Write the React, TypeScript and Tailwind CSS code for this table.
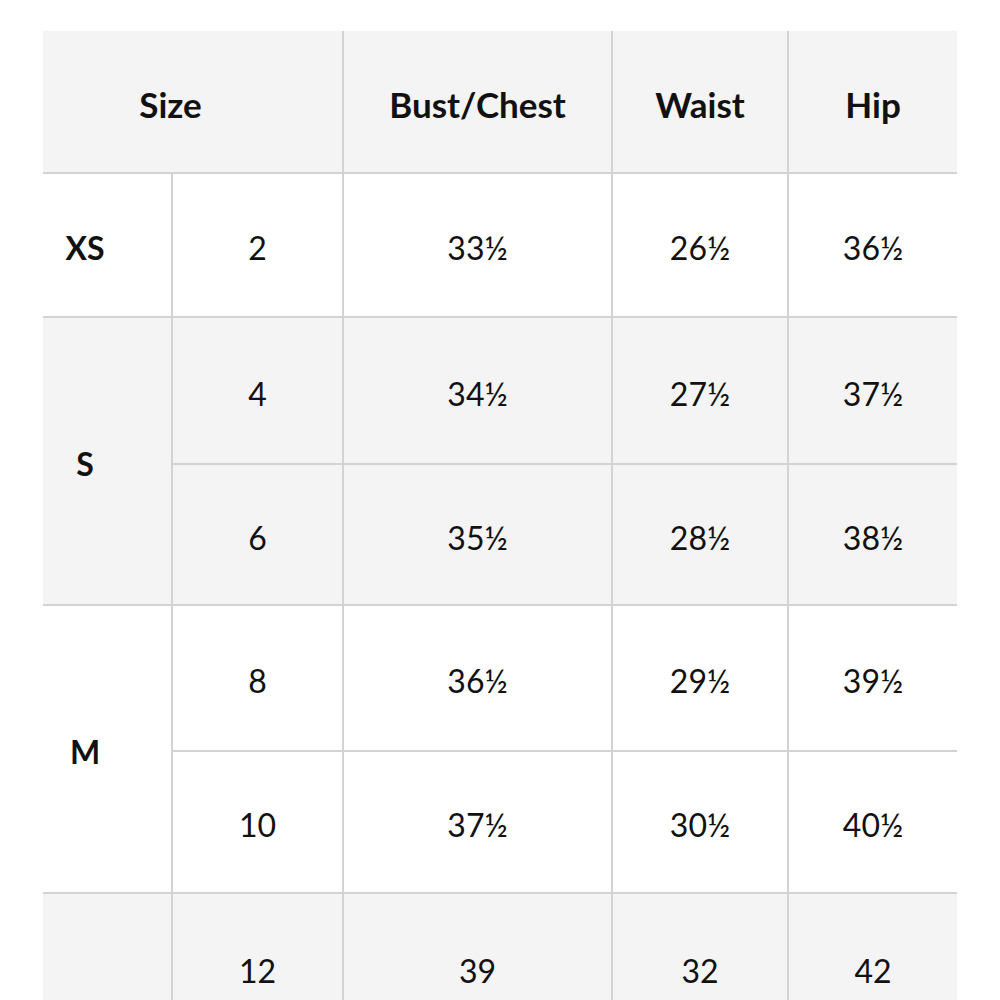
const rows = [
  { group: "XS", span: 1, size: "2", bust: "33½", waist: "26½", hip: "36½", h: "h-[144px]", bg: "bg-white" },
  { group: "S", span: 2, size: "4", bust: "34½", waist: "27½", hip: "37½", h: "h-[147px]", bg: "bg-[#f4f4f4]" },
  { group: "", span: 0, size: "6", bust: "35½", waist: "28½", hip: "38½", h: "h-[141px]", bg: "bg-[#f4f4f4]" },
  { group: "M", span: 2, size: "8", bust: "36½", waist: "29½", hip: "39½", h: "h-[146px]", bg: "bg-white" },
  { group: "", span: 0, size: "10", bust: "37½", waist: "30½", hip: "40½", h: "h-[142px]", bg: "bg-white" },
  { group: "L", span: 2, size: "12", bust: "39", waist: "32", hip: "42", h: "h-[150px]", bg: "bg-[#f4f4f4]" },
  { group: "", span: 0, size: "14", bust: "41", waist: "34", hip: "44", h: "h-[150px]", bg: "bg-[#f4f4f4]" },
];

const cell = "border-2 border-[#d3d3d3] pt-[6px] text-center align-middle";

export default function App() {
  return (
    <div className="min-h-screen bg-white pt-[31px] pl-[43px] text-[#111] [font-family:Lato,'Noto_Sans',sans-serif]">
      <table className="w-[914px] table-fixed border-collapse border-hidden text-[32px]">
        <colgroup>
          <col className="w-[129px]" />
          <col className="w-[171px]" />
          <col className="w-[269px]" />
          <col className="w-[176px]" />
          <col className="w-[169px]" />
        </colgroup>
        <thead>
          <tr className="h-[142px] bg-[#f4f4f4] text-[35px] font-bold">
            <th colSpan={2} className={`${cell} pr-[44px]`}>Size</th>
            <th className={cell}>Bust/Chest</th>
            <th className={cell}>Waist</th>
            <th className={cell}>Hip</th>
          </tr>
        </thead>
        <tbody>
          {rows.map((r) => (
            <tr key={r.size} className={`${r.h} ${r.bg}`}>
              {r.span > 0 && (
                <td rowSpan={r.span} className={`${cell} pr-[44px] font-bold`}>
                  {r.group}
                </td>
              )}
              <td className={cell}>{r.size}</td>
              <td className={cell}>{r.bust}</td>
              <td className={cell}>{r.waist}</td>
              <td className={cell}>{r.hip}</td>
            </tr>
          ))}
        </tbody>
      </table>
    </div>
  );
}
